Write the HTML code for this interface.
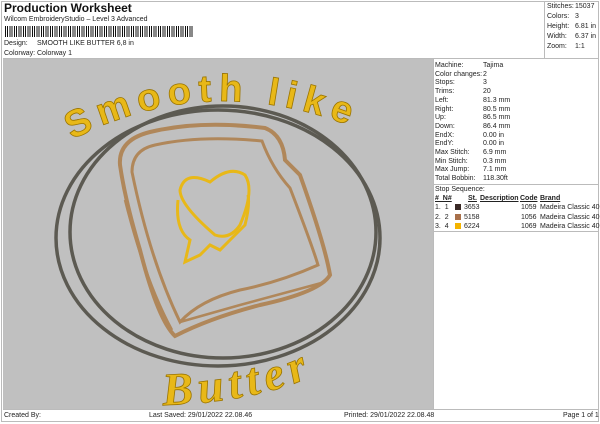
<!DOCTYPE html>
<html><head><style>
*{margin:0;padding:0;box-sizing:border-box}
body{width:600px;height:424px;background:#fff;font-family:"Liberation Sans",sans-serif;font-size:7px;color:#222;position:relative;overflow:hidden}
.a{position:absolute;white-space:nowrap}
</style></head><body>
<div class="a" style="left:1px;top:1px;width:598px;height:421px;border:1px solid #bbb"></div>
<div class="a" style="left:4px;top:1px;font-size:12px;font-weight:bold;color:#111">Production Worksheet</div>
<div class="a" style="left:4px;top:16px">Wilcom EmbroideryStudio – Level 3 Advanced</div>
<div class="a" style="left:5px;top:26px;width:188px;height:11px;background:repeating-linear-gradient(90deg,#111 0 1px,#fff 1px 2px,#111 2px 3px,#fff 3px 4.5px)"></div>
<div class="a" style="left:4px;top:40px">Design:</div><div class="a" style="left:37px;top:40px">SMOOTH LIKE BUTTER 6,8 in</div>
<div class="a" style="left:4px;top:50px">Colorway:</div><div class="a" style="left:37px;top:50px">Colorway 1</div>
<div class="a" style="left:544px;top:1px;width:1px;height:57px;background:#bbb"></div>
<div class="a" style="left:3px;top:58px;width:596px;height:1px;background:#bbb"></div>
<div class="a" style="left:547px;top:2px;line-height:10px">Stitches:<br>Colors:<br>Height:<br>Width:<br>Zoom:</div>
<div class="a" style="left:575px;top:2px;line-height:10px">15037<br>3<br>6.81 in<br>6.37 in<br>1:1</div>
<div class="a" style="left:3px;top:59px;width:430px;height:350px;background:#c0c0c0"></div>
<svg class="a" style="left:3px;top:59px" width="430" height="350" viewBox="3 59 430 350">
<ellipse cx="218" cy="238" rx="162" ry="128" fill="none" stroke="#5c5a52" stroke-width="3.5"/>
<ellipse cx="223" cy="232" rx="153" ry="126" fill="none" stroke="#5c5a52" stroke-width="3.5"/>
<defs><path id="t1" d="M72 140 Q215 65 372 135"/><path id="t2" d="M163 405 Q270 402 335 365"/></defs>
<text font-family="Liberation Sans" font-weight="bold" font-size="38" fill="#e8b818" stroke="#9a7400" stroke-width="0.8" letter-spacing="7"><textPath href="#t1">Smooth like</textPath></text>
<text font-family="Liberation Serif" font-style="italic" font-weight="bold" font-size="46" fill="#e8b818" stroke="#9a7400" stroke-width="0.8" letter-spacing="6"><textPath href="#t2">Butter</textPath></text>
<g fill="none" stroke="#b0875a" stroke-width="4">
<path d="M120 165 Q118 140 150 132 Q200 120 265 128 Q283 135 285 160 L300 175 Q325 245 330 275 Q320 292 260 305 Q210 318 175 336 Q158 320 140 250 Q125 200 120 165Z"/>
<path d="M132 172 Q132 150 155 145 Q200 135 262 141 Q272 168 290 188 Q312 245 318 265 Q280 282 240 290 Q200 300 180 322 Q150 260 132 172Z" stroke-width="3"/>
<path d="M125 200 Q145 280 172 330 M180 322 L240 305 L325 282" stroke-width="2.5"/>
</g>
<g fill="none" stroke="#e8b818" stroke-width="3">
<path d="M215 235 Q180 205 180 190 Q185 170 210 182 Q230 165 245 175 Q255 190 240 225 Q230 240 215 235Z"/>
<path d="M178 200 Q175 230 190 240 L185 262 L200 255 L210 245 L220 250 L235 235 L245 225 Q250 205 248 195"/>
</g>
</svg>
<div class="a" style="left:433px;top:59px;width:1px;height:350px;background:#bbb"></div>
<div class="a" style="left:435px;top:62px;line-height:8.7px">Machine:<br>Color changes:<br>Stops:<br>Trims:<br>Left:<br>Right:<br>Up:<br>Down:<br>EndX:<br>EndY:<br>Max Stitch:<br>Min Stitch:<br>Max Jump:<br>Total Bobbin:</div>
<div class="a" style="left:483px;top:62px;line-height:8.7px">Tajima<br>2<br>3<br>20<br>81.3 mm<br>80.5 mm<br>86.5 mm<br>86.4 mm<br>0.00 in<br>0.00 in<br>6.9 mm<br>0.3 mm<br>7.1 mm<br>118.30ft</div>
<div class="a" style="left:433px;top:184px;width:166px;height:1px;background:#bbb"></div>
<div class="a" style="left:435px;top:186px">Stop Sequence:</div>
<div class="a" style="left:435px;top:195px;font-weight:bold;text-decoration:underline">#&nbsp;&nbsp;N#</div>
<div class="a" style="left:468px;top:195px;font-weight:bold;text-decoration:underline">St.</div>
<div class="a" style="left:480px;top:195px;font-weight:bold;text-decoration:underline">Description</div>
<div class="a" style="left:520px;top:195px;font-weight:bold;text-decoration:underline">Code</div>
<div class="a" style="left:540px;top:195px;font-weight:bold;text-decoration:underline">Brand</div>
<div class="a" style="left:435px;top:203px;line-height:9.5px">1.&nbsp;&nbsp;1<br>2.&nbsp;&nbsp;2<br>3.&nbsp;&nbsp;4</div>
<div class="a" style="left:455px;top:204px;width:6px;height:6px;background:#3a2a26"></div>
<div class="a" style="left:455px;top:213.5px;width:6px;height:6px;background:#a8704a"></div>
<div class="a" style="left:455px;top:223px;width:6px;height:6px;background:#f4b400"></div>
<div class="a" style="left:464px;top:203px;line-height:9.5px">3653<br>5158<br>6224</div>
<div class="a" style="left:521px;top:203px;line-height:9.5px">1059<br>1056<br>1069</div>
<div class="a" style="left:540px;top:203px;line-height:9.5px">Madeira Classic 40<br>Madeira Classic 40<br>Madeira Classic 40</div>
<div class="a" style="left:433px;top:231px;width:166px;height:1px;background:#bbb"></div>
<div class="a" style="left:3px;top:409px;width:596px;height:1px;background:#bbb"></div>
<div class="a" style="left:4px;top:412px">Created By:</div>
<div class="a" style="left:149px;top:412px">Last Saved: 29/01/2022 22.08.46</div>
<div class="a" style="left:344px;top:412px">Printed: 29/01/2022 22.08.48</div>
<div class="a" style="left:563px;top:412px">Page 1 of 1</div>
</body></html>
